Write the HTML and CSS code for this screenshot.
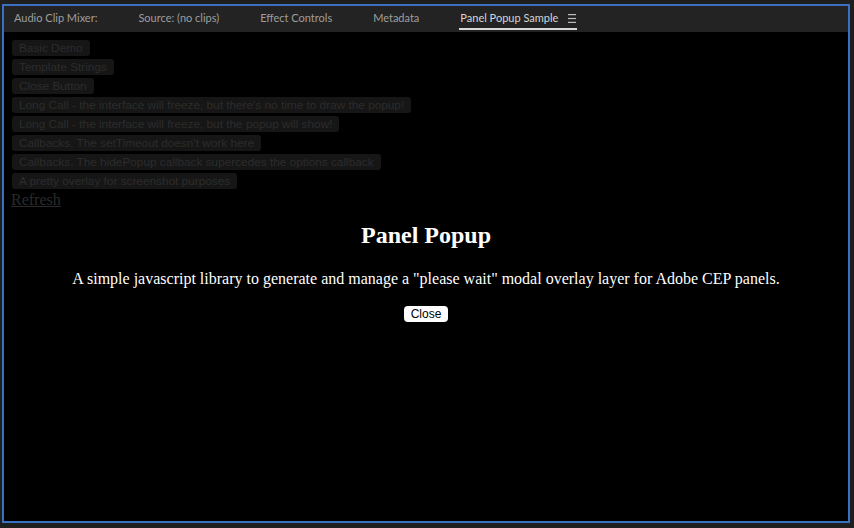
FILE: index.html
```html
<!DOCTYPE html>
<html>
<head>
<meta charset="utf-8">
<link rel="stylesheet" href="styles.css">
</head>
<body>
<div class="frame">
  <div class="tabbar">
    <span class="tab">Audio Clip Mixer:</span>
    <span class="tab">Source: (no clips)</span>
    <span class="tab">Effect Controls</span>
    <span class="tab">Metadata</span>
    <span class="tab active">Panel Popup Sample<svg class="menu" width="8" height="9" viewBox="0 0 8 9"><rect x="0" y="0" width="8" height="1.2" fill="#bdbdbd"/><rect x="0" y="3.9" width="8" height="1.2" fill="#bdbdbd"/><rect x="0" y="7.8" width="8" height="1.2" fill="#bdbdbd"/></svg></span>
  </div>
  <div class="panel">
    <div class="demos">
      <button class="demo">Basic Demo</button>
      <button class="demo">Template Strings</button>
      <button class="demo">Close Button</button>
      <button class="demo">Long Call - the interface will freeze, but there's no time to draw the popup!</button>
      <button class="demo">Long Call - the interface will freeze, but the popup will show!</button>
      <button class="demo">Callbacks. The setTimeout doesn't work here</button>
      <button class="demo">Callbacks. The hidePopup callback supercedes the options callback</button>
      <button class="demo">A pretty overlay for screenshot purposes</button>
    </div>
    <a class="refresh" href="#">Refresh</a>
    <div class="overlay">
      <h2 class="popup-title">Panel Popup</h2>
      <p class="popup-text">A simple javascript library to generate and manage a "please wait" modal overlay layer for Adobe CEP panels.</p>
      <button class="close">Close</button>
    </div>
  </div>
</div>
</body>
</html>
```

FILE: styles.css
```css
html, body {
  margin: 0;
  padding: 0;
}
body {
  width: 854px;
  height: 528px;
  background: #1f1f1f;
  overflow: hidden;
  padding-top: 4px;
  padding-left: 2px;
  box-sizing: border-box;
}
.frame {
  width: 848px;
  height: 519px;
  box-sizing: border-box;
  border: 2px solid #3b6fc2;
  display: flex;
  flex-direction: column;
}
.tabbar {
  height: 26px;
  flex: none;
  background: #232323;
  display: flex;
  gap: 41px;
  padding-left: 10px;
  font-family: Lato, "Open Sans", sans-serif;
  font-size: 11px;
  line-height: 24px;
  color: #9e9e9e;
  white-space: nowrap;
}
.tab {
  display: flex;
  align-items: center;
  height: 24px;
}
.tab.active {
  position: relative;
  color: #d6d6d6;
  gap: 10px;
}
.tab.active::after {
  content: "";
  position: absolute;
  left: -1px;
  right: -1px;
  top: 22px;
  height: 2px;
  background: #d8d8d8;
}
.menu {
  display: block;
}
.panel {
  flex: 1;
  position: relative;
  background: #000;
  padding: 8px 8px 0 8px;
}
.demos {
  display: flex;
  flex-direction: column;
  align-items: flex-start;
  gap: 3px;
}
.demo {
  height: 16px;
  padding: 0 7px;
  border: none;
  border-radius: 3px;
  background: #161616;
  color: #2c2c2c;
  font-family: "Liberation Sans", Arial, sans-serif;
  font-size: 11.8px;
  line-height: 16px;
  white-space: nowrap;
}
.refresh {
  display: block;
  width: max-content;
  margin-top: 2px;
  font-family: "Liberation Serif", "Times New Roman", serif;
  font-size: 16px;
  line-height: 18.4px;
  color: #2b2b2b;
  text-decoration: underline;
  margin-left: -1px;
}
.overlay {
  position: absolute;
  inset: 0;
  padding-top: 190px;
  text-align: center;
  color: #fff;
  font-family: "Liberation Serif", "Times New Roman", serif;
}
.popup-title {
  margin: 0 0 21px;
  font-size: 24px;
  font-weight: bold;
}
.popup-text {
  margin: 0 0 18px;
  font-size: 16px;
}
.close {
  display: block;
  margin: 0 auto;
  height: 16px;
  padding: 0 7px;
  border: none;
  border-radius: 4px;
  background: #fff;
  color: #000;
  font-family: "Liberation Sans", Arial, sans-serif;
  font-size: 12px;
  line-height: 16px;
}
```
